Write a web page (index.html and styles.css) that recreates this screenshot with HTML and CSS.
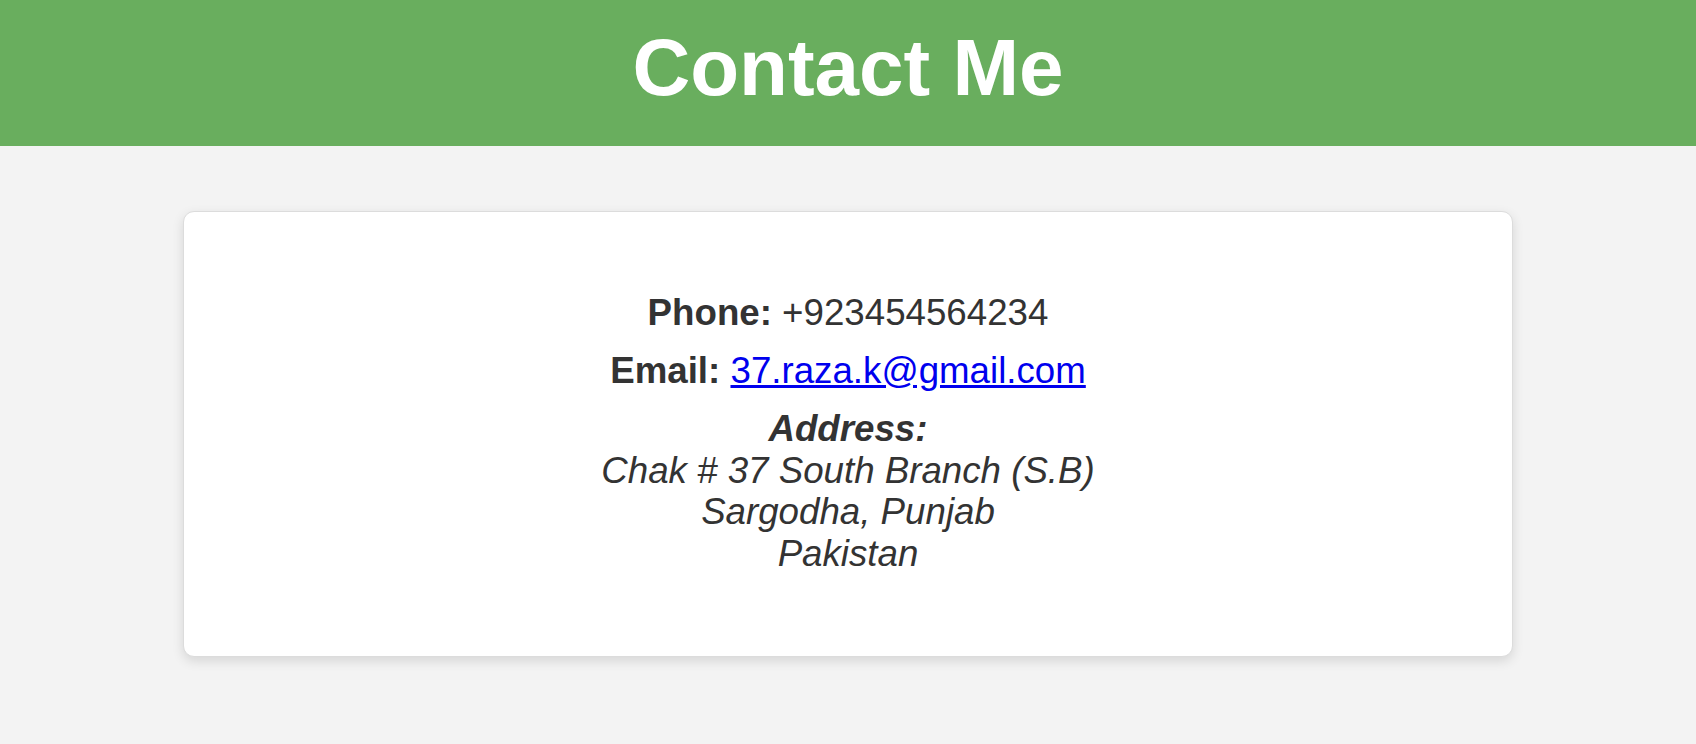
FILE: index.html
```html
<!DOCTYPE html>
<html lang="en">
<head>
<meta charset="utf-8">
<title>Contact Me</title>
<link rel="stylesheet" href="styles.css">
</head>
<body>
  <header class="site-header">
    <h1 class="site-title">Contact Me</h1>
  </header>
  <main class="page">
    <section class="contact-card">
      <p class="contact-line"><strong>Phone:</strong> +923454564234</p>
      <p class="contact-line"><strong>Email:</strong> <a class="contact-link" href="mailto:37.raza.k@gmail.com">37.raza.k@gmail.com</a></p>
      <address class="contact-address"><strong>Address:</strong><br>Chak # 37 South Branch (S.B)<br>Sargodha, Punjab<br>Pakistan</address>
    </section>
  </main>
</body>
</html>
```

FILE: styles.css
```css
* {
  box-sizing: border-box;
}

html, body {
  margin: 0;
  padding: 0;
}

body {
  background: #f3f3f3;
  font-family: "Liberation Sans", Arial, Helvetica, sans-serif;
  color: #333333;
  height: 744px;
}

.site-header {
  background: #69ae5e;
  height: 146px;
  padding-top: 23px;
  text-align: center;
}

.site-title {
  margin: 0;
  font-size: 80px;
  font-weight: bold;
  line-height: 89px;
  color: #ffffff;
}

.page {
  padding-top: 65px;
  display: flex;
  justify-content: center;
}

.contact-card {
  width: 1330px;
  height: 446px;
  background: #ffffff;
  border: 1px solid #dcdcdc;
  border-radius: 11px;
  box-shadow: 0 4px 12px rgba(0, 0, 0, 0.12);
  padding: 80px 20px;
  display: flex;
  flex-direction: column;
  align-items: center;
  gap: 17px;
  text-align: center;
}

.contact-line {
  margin: 0;
  font-size: 36.7px;
  line-height: 41px;
}

.contact-link {
  color: #0000ee;
  text-decoration: underline;
}

.contact-address {
  font-size: 36.7px;
  line-height: 41.5px;
  font-style: italic;
}
```
